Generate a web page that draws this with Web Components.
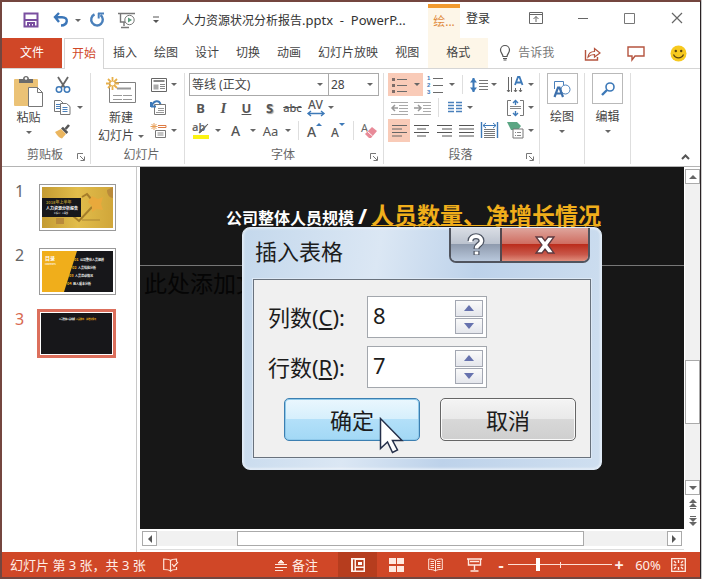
<!DOCTYPE html>
<html lang="zh-CN">
<head>
<meta charset="utf-8">
<meta name="viewport" content="width=device-width, initial-scale=1">
<title>人力资源状况分析报告.pptx - PowerPoint</title>
<style>
  html, body { margin: 0; height: 100%; }
  body {
    background: #c9c9c9;
    font: 12px/18px "Noto Sans", "Noto Sans CJK SC", sans-serif;
    color: #444;
    --accent: #d04727;
    --cell: 23px;
  }
</style>
</head>
<body>
<pp-app></pp-app>
<script>
const ICONS = {
  save: [16,16,'<path d="M1.5 1.5h13v13h-13z" fill="none" stroke="#7a4fa0" stroke-width="2"/><path d="M2 8h12M5 15v-4h6v4M8 11v4" fill="none" stroke="#7a4fa0" stroke-width="2"/>'],
  undo: [16,16,'<path d="M6 1L2 5l4 5M2.500 5.200H9c7 0 6 8-1 8.300" fill="none" stroke="#3b76b8" stroke-width="2.400"/>'],
  redo: [16,16,'<path d="M11.500 3a5.800 5.800 0 1 1-6 -.6" fill="none" stroke="#4a80bb" stroke-width="2.400"/><path d="M9 1.500h6M9.700 1v5.500" fill="none" stroke="#4a80bb" stroke-width="2"/>'],
  show: [18,17,'<path d="M0 1.500h17M2.500 2v8h5M6 10v4M3 15.500h8" fill="none" stroke="#777" stroke-width="1.400"/><circle cx="11.500" cy="8" r="4.700" fill="#fff" stroke="#777"/><path d="M10 5.500l4 2.500-4 2.500z" fill="#5c9c7c"/>'],
  qat: [8,8,'<path d="M1 1h6" stroke="#555"/><path d="M1 4h6L4 7z" fill="#555"/>'],
  ribbonopt: [14,12,'<path d="M.5.500h13v11H.5zM.5 2.500h13M7 10V4.500M4.500 7L7 4.500 9.500 7" fill="none" stroke="#666"/>'],
  min: [12,12,'<path d="M1 6.500h10" stroke="#666"/>'],
  max: [12,12,'<path d="M.5 1.500h10v10H.5z" fill="none" stroke="#777"/>'],
  close: [12,12,'<path d="M1 1l10 10M11 1L1 11" stroke="#666" stroke-width="1.200"/>'],
  bulb: [12,16,'<path d="M4 11.500C4 9 1.500 8 1.500 5a4.500 4.500 0 0 1 9 0c0 3-2.500 4-2.500 6.500zM4 13.500h4M4.500 15h3" fill="none" stroke="#555" stroke-width="1.200"/>'],
  share: [17,15,'<path d="M1.500 4v10h12v-3" fill="none" stroke="#b5543f" stroke-width="1.400"/><path d="M4 11c.5-4 3-5.500 6.500-5.500V2.500l5.500 4.500-5.500 4V8.500C8 8.500 6 9 4 11z" fill="none" stroke="#b5543f" stroke-width="1.200"/>'],
  comment: [18,15,'<path d="M1 1h16v9H8l-3 4v-4H1z" fill="none" stroke="#b5543f" stroke-width="1.400"/>'],
  smile: [17,17,'<circle cx="8.500" cy="8.500" r="8" fill="#f7c91f"/><circle cx="5.800" cy="6" r="1.200" fill="#5b4510"/><circle cx="11.200" cy="6" r="1.200" fill="#5b4510"/><path d="M3.500 9.500c2 4.500 8 4.500 10 0" fill="none" stroke="#5b4510" stroke-width="1.200"/>'],
  paste: [31,32,'<rect x="1" y="4" width="24" height="27" rx="1" fill="#ebc276"/><path d="M6 8V4h4c0-4 6-4 6 0h4v4z" fill="#6b6b6b"/><circle cx="13" cy="3.500" r="1.300" fill="#fff"/><path d="M15.500 12.500h9l5 5v14h-14z" fill="#fff" stroke="#777"/><path d="M24.500 12.500v5h5" fill="none" stroke="#777"/>'],
  cut: [16,16,'<path d="M3 0l7 11M13 0L6 11" stroke="#666" stroke-width="1.800"/><circle cx="4" cy="12.500" r="2.700" fill="none" stroke="#3d79b8" stroke-width="1.500"/><circle cx="12" cy="12.500" r="2.700" fill="none" stroke="#3d79b8" stroke-width="1.500"/>'],
  copy: [17,15,'<path d="M.5.500h6l3 3v8h-9z" fill="#fff" stroke="#777"/><path d="M2 4.500h5M2 6.500h5M2 8.500h5" stroke="#4a80bb"/><path d="M6.500 3.500h6l3.500 3v8H6.500z" fill="#fff" stroke="#777"/><path d="M8.500 7.500h5M8.500 9.500h5M8.500 11.500h5" stroke="#4a80bb"/>'],
  brush: [17,16,'<path d="M1 9l6-3 5 5-4 4.500C5 15 3 12 1 9z" fill="#ebb65f"/><path d="M7 5.500l5.500 5.500 1.700-2L9 3.700z" fill="#555"/><path d="M11.500 6L15 2" stroke="#555" stroke-width="2.600"/>'],
  newslide: [31,28,'<path d="M3.500 5.500h26v20h-26z" fill="#fff" stroke="#808080"/><path d="M11 11.500h14" stroke="#999" stroke-width="2"/><path d="M7 18.500h19M7 22.500h19" stroke="#999" stroke-dasharray="9 1"/><g stroke="#e8b04a" stroke-width="1.800"><path d="M6.500 0v13M0 6.500h13M2 2l9 9M11 2l-9 9"/></g><circle cx="6.500" cy="6.500" r="2" fill="#fff"/>'],
  layout: [16,14,'<path d="M.5.500h15v13H.5z" fill="#fff" stroke="#666"/><path d="M2.500 3h11" stroke="#888" stroke-width="2"/><path d="M2.500 6.500h5v5h-5z" fill="#aaa"/><path d="M9 6.500h5M9 8.500h5M9 10.500h5" stroke="#888"/>'],
  reset: [17,16,'<path d="M4.500 4.500h11v10h-11z" fill="#fff" stroke="#777"/><path d="M8 8.500h6M8 10.500h6M6 12.500h8" stroke="#999"/><path d="M1 7V2M1 6.500h5M1.500 6C4 0 9 0 10.500 4" fill="none" stroke="#3d79b8" stroke-width="2"/>'],
  section: [17,16,'<path d="M4 0v7M.5 3.500h7M1.500 1l5 5M6.500 1l-5 5" stroke="#e8a05a"/><path d="M8 2.500h8v2H8" fill="none" stroke="#dd7a42"/><path d="M5.500 7.500h10v7h-10z" fill="#fff" stroke="#777"/><path d="M7.500 10h6M7.500 12h6" stroke="#888"/>'],
  eraser: [17,17,'<text x="0" y="10" font-size="11" font-family="Noto Sans" fill="#666">A</text><path d="M4 12l7-7 5 4-6 7H8z" fill="#e88a98"/><path d="M6.500 9.500l5 4.500" stroke="#fff"/>'],
  spacing: [20,14,'<path d="M4.500 0v14" stroke="#3d79b8" stroke-width="2"/><path d="M1 4.500L4.500 0 8 4.500zM1 9.500L4.500 14 8 9.500z" fill="#3d79b8"/><path d="M10 2.500h9M10 5.500h9M10 8.500h9M10 11.500h9" stroke="#777"/>'],
  avspace: [18,18,'<text x="1" y="10" font-size="12" font-weight="500" font-family="Noto Sans" fill="#555">AV</text><path d="M1 14.500h16M4 12l-3 2.500L4 17M14 12l3 2.500L14 17" fill="none" stroke="#3d79b8" stroke-width="1.400"/>'],
  highlight: [18,18,'<text x="0" y="9" font-size="11" font-weight="600" font-family="Noto Sans" fill="#666">ab</text><path d="M16 2l-7 8-2 1 1-2z" fill="#666" stroke="#666"/><path d="M1 13h16v4H1z" fill="#fbf314"/>'],
  grow: [16,18,'<text x="0" y="15" font-size="14" font-weight="500" font-family="Noto Sans" fill="#555">A</text><path d="M9 4l3-3 3 3z" fill="#3d79b8"/>'],
  shrink: [16,18,'<text x="1" y="15" font-size="12" font-weight="500" font-family="Noto Sans" fill="#555">A</text><path d="M9 1h6l-3 3z" fill="#3d79b8"/>'],
  bullets: [16,16,'<path d="M0 1h3v3H0zM0 7h3v3H0zM0 13h3v3H0z" fill="#7d6c68"/><path d="M5 2.500h10M5 8.500h10M5 14.500h10" stroke="#6b6b6b"/>'],
  numbers: [16,20,'<g font-size="6" font-weight="700" font-family="Liberation Sans" fill="#3d79b8"><text x="0" y="5">1</text><text x="0" y="12">2</text><text x="0" y="19">3</text></g><path d="M6 3.500h10M6 10.500h10M6 17.500h10" stroke="#6b6b6b"/>'],
  textdir: [17,17,'<path d="M1.500 1v15M4.500 1v15M8.500 12v4M13.500 12v4" stroke="#666"/><path d="M0 14l1.500 2L3 14M7 14l1.500 2 1.500-2M12 14l1.500 2 1.500-2" fill="none" stroke="#666"/><path d="M8 9l3-8h1.500l3 8M9.300 6.500h5" fill="none" stroke="#3d79b8" stroke-width="1.800"/>'],
  outdent: [17,14,'<path d="M0 1.500h17M8 4.500h9M8 7.500h9M8 10.500h9M0 13.500h17" stroke="#aaa"/><path d="M7 7H1M4 4L1 7l3 3" fill="none" stroke="#999" stroke-width="1.500"/>'],
  indent: [17,14,'<path d="M0 1.500h17M9 4.500h8M9 7.500h8M9 10.500h8M0 13.500h17" stroke="#aaa"/><path d="M0 7h7M4 4l3 3-3 3" fill="none" stroke="#999" stroke-width="1.500"/>'],
  columns: [14,13,'<path d="M0 1.500h6M0 4.500h6M0 7.500h6M0 10.500h6M8 1.500h6M8 4.500h6M8 7.500h6M8 10.500h6" stroke="#4a80bb" stroke-width="1.400"/>'],
  valign: [17,16,'<path d="M4 .5H.5v15H4M13 .5h3.500v15H13" fill="none" stroke="#777"/><path d="M3 8.500h11M3 6.500h11" stroke="#888"/><path d="M8.500 0v5M8.500 11v5M6 3l2.500-2.500L11 3M6 13l2.500 2.500L11 13" fill="none" stroke="#3d79b8" stroke-width="1.400"/>'],
  left: [15,12,'<path d="M0 .5h15M0 4h10M0 7.500h15M0 11h10" stroke="#666"/>'],
  center: [15,12,'<path d="M0 .5h15M3 4h9M0 7.500h15M3 11h9" stroke="#555"/>'],
  right: [15,12,'<path d="M0 .5h15M5 4h10M0 7.500h15M5 11h10" stroke="#555"/>'],
  justify: [15,12,'<path d="M0 .5h15M0 4h15M0 7.500h15M0 11h15" stroke="#555"/>'],
  distribute: [17,17,'<path d="M.5 0v16M16.500 0v16" stroke="#3d79b8" stroke-width="1.400"/><path d="M2 3.500h13M5 1L2 3.500 5 6M12 1l3 2.500L12 6" fill="none" stroke="#3d79b8"/><path d="M3 7.500h11M3 9.500h11M3 11.500h11M3 13.500h11M3 15.500h11" stroke="#777"/>'],
  smartart: [17,17,'<path d="M0 0h10l4 4-3 4H4z" fill="#5aa583"/><path d="M6 7h10v9H6z" fill="#fff" stroke="#777"/><path d="M8 10.500h1M10 10.500h4M8 13.500h1M10 13.500h4" stroke="#888"/>'],
  shapes: [18,18,'<path d="M1.500 9V1.500h9V5" fill="none" stroke="#4a80bb"/><circle cx="12.500" cy="9.500" r="4.500" fill="#fff" stroke="#4a80bb"/><path d="M1.500 17L5 7.500h1.500L10 17M3 13.500h5.500" fill="none" stroke="#3d70ac" stroke-width="2.200"/>'],
  find: [14,14,'<circle cx="9" cy="5" r="4" fill="none" stroke="#3d79b8" stroke-width="1.600"/><path d="M6 8l-5 5" stroke="#3d79b8" stroke-width="2.400"/>'],
  launcher: [8,8,'<path d="M.5 6V.5H6M3 3l4 4M7.500 3.500v4h-4" fill="none" stroke="#777"/>'],
  up: [8,4,'<path d="M0 4h8L4 0z" fill="#666"/>'],
  down: [8,4,'<path d="M0 0h8L4 4z" fill="#666"/>'],
  prev: [5,8,'<path d="M5 0v8L1 4z" fill="#555"/>'],
  next: [5,8,'<path d="M0 0v8l4-4z" fill="#555"/>'],
  dblup: [8,10,'<path d="M0 4h8L4 0zM0 8h8L4 4zM1 9h6v1H1z" fill="#666"/>'],
  dbldown: [8,10,'<path d="M0 6h8L4 10zM0 2h8L4 6zM1 0h6v1H1z" fill="#666"/>'],
  collapse: [9,6,'<path d="M1 5l3.500-3.500L8 5" fill="none" stroke="#555" stroke-width="2"/>'],
  spell: [16,14,'<path d="M7.500 2.500C6 1 3 1 .7 1v10.500c2.500 0 5 0 6.800 1.500V2.500C9 1 11 1 13.500 1v3M7.500 13c1-1 3-1.500 6-1.500V9M9 6l2 2.500L15 4" fill="none" stroke="#ffe3d8" stroke-width="1.200"/>'],
  notes: [12,12,'<path d="M3 4h6L6 1zM0 5.500h12M0 8.500h12M0 11.500h8" stroke="#ffe9e0" fill="#ffe9e0"/>'],
  normal: [14,14,'<path d="M0 0h14v14H0z" fill="#fff2ec"/><path d="M2 1.500h1.500v11H2zM5 2h7.500v6.500H5zM5 10h7.500v2.500H5z" fill="#b63d1e"/><path d="M7 4h4v3H7z" fill="#fff"/>'],
  grid: [15,14,'<path d="M0 0h7v6H0zM8 0h7v6H8zM0 8h7v6H0zM8 8h7v6H8z" fill="#ffe9e0"/>'],
  reading: [15,14,'<path d="M7.500 2.500C5 1 3 1 .7 1v10.500c2.500 0 5 0 6.800 1.500C9 11.500 11 11.500 14.300 11.500V1C11 1 9.500 1 7.500 2.500zV13M2.500 3.500H6M2.500 5.500H6M2.500 7.500H6M2.500 9.500H6M9 3.500h3.500M9 5.500h3.500M9 7.500h3.500M9 9.500h3.500" fill="none" stroke="#ffe3d8"/>'],
  play: [15,14,'<path d="M0 1h15M1.500 1v6h12V1M3 3.500h9M7.500 7v5M3.500 13h8" fill="none" stroke="#ffe9e0" stroke-width="1.400"/>'],
  fit: [15,14,'<path d="M.7.700h13.600v12.600H.7z" fill="none" stroke="#ffe9e0" stroke-width="1.300"/><path d="M7.500 2v3M7.500 9v3M2.500 7h3M9.500 7h3M3 3l2 2M12 3l-2 2M3 11l2-2M12 11l-2-2" stroke="#ffe9e0" stroke-width="1.400"/>'],
  cursor: [24,37,'<path d="M1.500 1.500v30l7-6.500 5 10.500 5-2.500-5-9.500h9.500z" fill="#fff" stroke="#25304a" stroke-width="1.500"/>'],
  help: [18,24,'<path d="M3.500 8c0-6.500 11-6.500 11 0 0 3.500-5 3.500-5 8M9.500 18v4" fill="none" stroke="#4b5260" stroke-width="6"/><path d="M3.500 9V8c0-6.500 11-6.500 11 0 0 3.500-5 3.500-5 7.500M9.500 18.500v3" fill="none" stroke="#fff" stroke-width="3.600"/>'],
  cross: [20,18,'<path d="M1 1h6l3 4 3-4h6l-6 8 6 8h-6l-3-4-3 4H1l6-8z" fill="#fff" stroke="#5d3a40" stroke-width="1.300"/>'],
  spinup: [10,6,'<path d="M0 6h10L5 0z" fill="#6672ae"/>'],
  spindown: [10,6,'<path d="M0 0h10L5 6z" fill="#6672ae"/>']
};
const RESET = `*{box-sizing:border-box}button{font:inherit;color:inherit;background:none;border:0;padding:0;margin:0;cursor:default;display:flex;align-items:center;justify-content:center}`;

function define(name, css, html) {
  customElements.define(name, class extends HTMLElement {
    connectedCallback() {
      if (this.shadowRoot) return;
      const t = document.createElement('template');
      t.innerHTML = `<style>${RESET}${css}</style>` + (typeof html === 'function' ? html(n => this.getAttribute(n), n => this.hasAttribute(n)) : html);
      this.attachShadow({ mode: 'open' }).append(t.content.cloneNode(true));
    }
  });
}

define('pp-icon', ':host{display:inline-flex;flex:none}svg{display:block;overflow:visible}', a => {
  const [w, h, body] = ICONS[a('name')];
  return `<svg width="${w}" height="${h}" viewBox="0 0 ${w} ${h}" aria-hidden="true">${body}</svg>`;
});

define('pp-tool', `
  :host{display:inline-flex;flex:none;height:23px}
  :host([selected]){background:#f9cbb8}
  button{height:100%}
  .main{width:var(--cell)}
  .caret{width:12px}
  :host([tight]) .caret{width:8px}
  .caret::before{content:"";border:3px solid transparent;border-top-color:#666;border-bottom:0}`,
  (a, has) => `<button class="main" aria-label="${a('label')}">${a('icon') ? `<pp-icon name="${a('icon')}"></pp-icon>` : '<slot></slot>'}</button>` +
    (has('menu') ? `<button class="caret" aria-label="${a('label')}选项"></button>` : ''));

define('pp-big', `
  :host{display:block;flex:none}
  button{flex-direction:column;justify-content:flex-start;width:100%;line-height:18px}
  .pic{height:36px;display:flex;align-items:center}
  :host([boxed]) .pic{width:31px;height:31px;border:1px solid #b9b9b9;justify-content:center;margin-bottom:4px}
  .arrow{border:3px solid transparent;border-top-color:#666;border-bottom:0;display:inline-block;vertical-align:middle}
  .alone{margin-top:4px}
  .last{white-space:nowrap}
  .last .arrow{margin-left:4px}`,
  a => `<button><span class="pic"><pp-icon name="${a('icon')}"></pp-icon></span><span>${a('label')}</span>` +
    (a('second') ? `<span class="last">${a('second')}<i class="arrow"></i></span>` : '<i class="arrow alone"></i>') + '</button>');

define('pp-group', `
  :host{display:flex;flex-direction:column;flex:none;padding:0 4px;border-right:1px solid #dedede;margin:4px 0 2px;width:var(--width)}
  .body{height:73px;display:flex}
  footer{display:flex;height:18px;align-items:center;color:#666}
  span{flex:1;text-align:center;padding-left:8px}
  button{width:10px;height:14px;margin-top:4px}`,
  (a, has) => `<div class="body"><slot></slot></div><footer><span>${a('label') || ''}</span>${has('launcher') ? `<button aria-label="${a('label')}设置"><pp-icon name="launcher"></pp-icon></button>` : ''}</footer>`);

define('pp-titlebar', `
  :host{display:flex;align-items:stretch;height:36px;padding-left:12px;color:#333}
  pp-tool{align-self:center}
  h1{font:inherit;margin:0;padding-left:12px;flex:0 1 258px;align-self:center;white-space:nowrap;overflow:hidden;line-height:20px}
  .latin{font-size:13px;white-space:pre}
  .context{width:32px;margin-top:2px;border-top:4px solid #f29a2e;background:#fdf6e8;color:#e08a3c;display:flex;align-items:center;justify-content:center;padding-bottom:2px}
  .login{width:36px;padding-bottom:2px}
  .win{margin-left:auto;display:flex}
  .win button{width:47px;height:32px}`,
  `<pp-tool icon="save" label="保存" style="--cell:34px"></pp-tool>
   <pp-tool icon="undo" label="撤消" menu tight style="--cell:26px"></pp-tool>
   <pp-tool icon="redo" label="重复" style="--cell:30px"></pp-tool>
   <pp-tool icon="show" label="从头开始" style="--cell:30px"></pp-tool>
   <pp-tool icon="qat" label="自定义快速访问工具栏" style="--cell:28px"></pp-tool>
   <h1>人力资源状况分析报告<span class="latin">.pptx  -  PowerP...</span></h1>
   <div class="context">绘...</div>
   <button class="login">登录</button>
   <div class="win">
     <button aria-label="功能区显示选项"><pp-icon name="ribbonopt"></pp-icon></button>
     <button aria-label="最小化"><pp-icon name="min"></pp-icon></button>
     <button aria-label="最大化"><pp-icon name="max"></pp-icon></button>
     <button aria-label="关闭"><pp-icon name="close"></pp-icon></button>
   </div>`);

define('pp-tab', `
  :host{display:flex}
  button{padding:0 8px;white-space:nowrap}
  :host([file]) button{background:var(--accent);color:#fff;padding:0 18px;margin-right:1px}
  :host([active]) button{border:1px solid #d5d5d5;border-bottom:0;color:var(--accent);background:#fff;padding:0 7px;margin-bottom:-1px}
  :host([context]) button{background:#fdf6e8;padding:0 18px}`,
  '<button role="tab"><slot></slot></button>');

define('pp-tabs', `
  :host{display:flex;height:31px;gap:1px;border-bottom:1px solid #d5d5d5;color:#444}
  .tell{padding-left:10px;gap:7px;color:#777}
  .right{margin-left:auto;display:flex}
  .right button{width:43px}`,
  `<pp-tab file>文件</pp-tab><pp-tab active>开始</pp-tab><pp-tab>插入</pp-tab><pp-tab>绘图</pp-tab><pp-tab>设计</pp-tab><pp-tab>切换</pp-tab><pp-tab>动画</pp-tab><pp-tab>幻灯片放映</pp-tab><pp-tab>视图</pp-tab><pp-tab context>格式</pp-tab>
   <button class="tell"><pp-icon name="bulb"></pp-icon>告诉我</button>
   <div class="right">
     <button aria-label="共享"><pp-icon name="share"></pp-icon></button>
     <button aria-label="批注"><pp-icon name="comment"></pp-icon></button>
     <button aria-label="反馈"><pp-icon name="smile"></pp-icon></button>
   </div>`);

define('pp-ribbon', `
  :host{display:flex;border-bottom:1px solid #b4b4b4;background:#fff}
  .col{display:flex;flex-direction:column}
  .fill{flex:1}
  .row{display:flex;height:23px}
  .sep{width:1px;margin:2px 4px;background:#dedede}
  .push{margin-left:auto}
  .combos{display:flex;width:190px}
  select{appearance:none;font:inherit;color:#444;height:23px;border:1px solid #aaa;background:#fff;border-radius:0;padding:0 2px;width:100%}
  label{position:relative;display:block;flex:1}
  label+label{flex:0 0 51px;margin-left:-1px}
  label::after{content:"";position:absolute;right:6px;top:10px;border:3px solid transparent;border-top-color:#666;border-bottom:0;pointer-events:none}
  .fmt{font-size:13px;font-weight:700;color:#555}
  .fmt i{font-family:"Liberation Serif",serif;font-size:15px}
  .fmt s{font-size:11px;font-weight:500}
  .sh{text-shadow:1px 1px 1px #999}
  .ltr{font-size:14px;font-weight:500;color:#555}
  .mid{font-size:13px;color:#555}
  .collapse{margin:auto 8px 2px auto;width:14px;height:14px}`,
  `<pp-group label="剪贴板" launcher style="--width:89px">
     <pp-big icon="paste" label="粘贴" style="width:45px"></pp-big>
     <div class="col"><pp-tool icon="cut" label="剪切"></pp-tool><pp-tool icon="copy" label="复制" menu></pp-tool><pp-tool icon="brush" label="格式刷"></pp-tool></div>
   </pp-group>
   <pp-group label="幻灯片" style="--width:94px">
     <pp-big icon="newslide" label="新建" second="幻灯片" style="width:52px"></pp-big>
     <div class="col"><pp-tool icon="layout" label="版式" menu tight></pp-tool><pp-tool icon="reset" label="重置"></pp-tool><pp-tool icon="section" label="节" menu tight></pp-tool></div>
   </pp-group>
   <pp-group label="字体" launcher style="--width:199px">
     <div class="col">
       <div class="combos"><label><select aria-label="字体"><option>等线 (正文)</option></select></label><label><select aria-label="字号"><option>28</option></select></label></div>
       <div class="row fmt"><pp-tool label="加粗">B</pp-tool><pp-tool label="倾斜"><i>I</i></pp-tool><pp-tool label="下划线"><u>U</u></pp-tool><pp-tool label="文字阴影"><span class="sh">S</span></pp-tool><pp-tool label="删除线"><s>abc</s></pp-tool><pp-tool icon="avspace" label="字符间距" menu tight></pp-tool></div>
       <div class="row"><pp-tool icon="highlight" label="突出显示" menu></pp-tool><pp-tool label="字体颜色" menu><span class="ltr">A</span></pp-tool><pp-tool label="更改大小写" menu><span class="mid">Aa</span></pp-tool><span class="sep"></span><pp-tool icon="grow" label="增大字号"></pp-tool><pp-tool icon="shrink" label="减小字号"></pp-tool><span class="sep"></span><pp-tool icon="eraser" label="清除格式"></pp-tool></div>
     </div>
   </pp-group>
   <pp-group label="段落" launcher style="--width:156px">
     <div class="col fill">
       <div class="row"><pp-tool selected icon="bullets" label="项目符号" menu></pp-tool><pp-tool icon="numbers" label="编号" menu></pp-tool><span class="sep"></span><pp-tool icon="spacing" label="行距" menu tight></pp-tool><pp-tool class="push" icon="textdir" label="文字方向" menu tight></pp-tool></div>
       <div class="row"><pp-tool icon="outdent" label="降低列表级别"></pp-tool><pp-tool icon="indent" label="提高列表级别"></pp-tool><span class="sep"></span><pp-tool icon="columns" label="分栏" menu tight></pp-tool><pp-tool class="push" icon="valign" label="对齐文本" menu tight></pp-tool></div>
       <div class="row"><pp-tool selected icon="left" label="左对齐" style="--cell:22px"></pp-tool><pp-tool icon="center" label="居中"></pp-tool><pp-tool icon="right" label="右对齐" style="--cell:22px"></pp-tool><pp-tool icon="justify" label="两端对齐"></pp-tool><pp-tool icon="distribute" label="分散对齐" style="--cell:22px"></pp-tool><pp-tool class="push" icon="smartart" label="转换为 SmartArt" menu tight></pp-tool></div>
     </div>
   </pp-group>
   <pp-group style="--width:45px"><pp-big boxed icon="shapes" label="绘图" style="width:36px"></pp-big></pp-group>
   <pp-group style="--width:46px"><pp-big boxed icon="find" label="编辑" style="width:37px"></pp-big></pp-group>
   <button class="collapse" aria-label="折叠功能区"><pp-icon name="collapse"></pp-icon></button>`);

define('pp-thumb', `
  :host{display:flex;align-items:flex-start;gap:15px;height:64px;font-size:16px;line-height:16px;color:#666}
  span{width:9px}
  button{border:1px solid #999;padding:2px;background:#fff;margin-top:1px}
  :host([selected]){color:#d8694f}
  :host([selected]) button{border:3px solid #dc6f5c;padding:1px;margin:-2px}
  ::slotted(svg){display:block;width:71px;height:41px}`,
  a => `<span>${a('number')}</span><button aria-label="幻灯片 ${a('number')}"><slot></slot></button>`);

define('pp-slides', `
  :host{display:block;flex:none;width:135px;border-right:1px solid #c8c8c8;padding:16px 0 0 13px;background:#fff}
  text{font-family:"Noto Sans CJK SC",sans-serif;font-weight:700}`,
  `<pp-thumb number="1"><svg viewBox="0 0 71 41">
     <defs><linearGradient id="g"><stop stop-color="#c49b32"/><stop offset=".5" stop-color="#e2bd4b"/><stop offset="1" stop-color="#d0a63a"/></linearGradient></defs>
     <path d="M0 0h71v41H0z" fill="url(#g)"/><path d="M40 10l5-3 5 6M50 20L37 34l-6-5" fill="none" stroke="#a57d2a" stroke-width="2"/><path d="M40 33h18" stroke="#a98332"/><path d="M50 9l6 3 5-2-2 7 2 6-6-1-5 3v-6l-4-4z" fill="#e9a93c"/><path d="M14 31h8v6h-8zM65 3l6-3v11c-4 0-6-4-6-8z" fill="#b98a3a"/>
     <path d="M0 11h39v19H0z" fill="#17171b"/><text x="4" y="17" font-size="4" fill="#a98b2d">2018年上半年</text><text x="4" y="23" font-size="4" fill="#fff">人力资源分析报告</text><text x="12" y="27" font-size="2" fill="#ccc">汇报人：人事部</text></svg></pp-thumb>
   <pp-thumb number="2"><svg viewBox="0 0 71 41">
     <path d="M0 0h71v41H0z" fill="#17171a"/><path d="M0 0h35L22 41H0z" fill="#f0ae1b"/><text x="3" y="9" font-size="5" fill="#fff">目录</text><text x="3" y="14" font-size="2" fill="#fff">CONTENTS</text>
     <g font-size="3" fill="#fff"><text x="38" y="10">公司整体人员规模</text><text x="36" y="18">人员结构分析</text><text x="33" y="26">人员流动情况</text><text x="31" y="34">用人成本分析</text></g>
     <g font-size="4" fill="#f0ae1b"><text x="32" y="10">01</text><text x="30" y="18">02</text><text x="27" y="26">03</text><text x="25" y="34">04</text></g></svg></pp-thumb>
   <pp-thumb number="3" selected><svg viewBox="0 0 71 41"><path d="M0 0h71v41H0z" fill="#17171a"/><text x="18" y="7" font-size="2" fill="#fff">公司整体人员规模</text><text x="35" y="7" font-size="2" fill="#f0ae1b">人员数量、净增长情况</text></svg></pp-thumb>`);

define('pp-spin', `
  :host{display:flex;align-items:center;height:42px}
  label{width:99px;white-space:nowrap}
  .box{display:flex;width:120px;height:42px;border:1px solid #a3a7ad;background:#fff;padding:3px}
  input{flex:1;min-width:0;border:0;padding:0 0 4px 2px;font:inherit;color:inherit;background:none;outline:0}
  .arrows{width:28px;display:grid;grid-template-rows:1fr 1fr;gap:1px}
  .arrows button{border:1px solid #a3a7b2;background:linear-gradient(#fafafa,#e4e6ec)}`,
  a => `<label for="n">${a('label')}(<u>${a('key')}</u>):</label><div class="box"><input id="n" inputmode="numeric" value="${a('value')}"><div class="arrows"><button aria-label="增加"><pp-icon name="spinup"></pp-icon></button><button aria-label="减少"><pp-icon name="spindown"></pp-icon></button></div></div>`);

define('pp-dialog', `
  :host{display:block;width:360px;border:1px solid #dfeaf6;border-radius:8px;background:linear-gradient(100deg,#c4d8ec,#dbe7f4 35%,#bdd2ea 60%,#cfdff0);box-shadow:inset 0 0 3px #fff;padding:0 10px 11px;font-size:22px;line-height:32px;color:#1c1c1c}
  header{display:flex;height:51px}
  h2{font:inherit;margin:0;padding:7px 0 0 2px;flex:1}
  .caps{display:flex;height:35px;border:2px solid #50545e;border-top:0;border-radius:0 0 7px 7px;overflow:hidden;margin-right:1px}
  .q{width:51px;background:linear-gradient(#d9dde4,#bcc3cf 48%,#8f9bae 50%,#b9c8dc);border-right:2px solid #54484e}
  .x{width:86px;background:linear-gradient(#dea59d,#cf6d60 48%,#bb2d1c 50%,#c9584a 80%,#e08e7d)}
  .client{background:#f0f0f0;border:1px solid #69727d;box-shadow:0 0 0 1px #dce8f5;padding:16px 14px;height:179px;display:flex;flex-direction:column;gap:8px}
  .actions{display:flex;gap:20px;padding-left:16px;margin-top:2px}
  .actions button{width:136px;height:43px;border:1px solid #666;border-radius:5px;background:linear-gradient(#f4f4f4,#e9e9e9 48%,#d8d8d8 50%,#cfcfcf);box-shadow:inset 0 0 0 1px #fafafa}
  .actions .ok{border-color:#3c7fb1;background:linear-gradient(#eaf7fe,#d6effc 48%,#b3e0f9 50%,#a2d8f5);box-shadow:inset 0 0 0 1px #8fc9ea}`,
  `<header><h2>插入表格</h2><div class="caps"><button class="q" aria-label="帮助"><pp-icon name="help"></pp-icon></button><button class="x" aria-label="关闭"><pp-icon name="cross"></pp-icon></button></div></header>
   <div class="client"><pp-spin label="列数" key="C" value="8"></pp-spin><pp-spin label="行数" key="R" value="7"></pp-spin>
   <div class="actions"><button class="ok">确定</button><button>取消</button></div></div>`);

define('pp-stage', `
  :host{display:block;position:relative;overflow:hidden;background:#171717;min-width:0}
  h2{margin:0;padding:31px 0 0 3px;height:99px;border-bottom:1px solid #777;text-align:center;font-weight:700;font-size:16px;line-height:34px;color:#fff;white-space:nowrap}
  .slash{font-size:22px;padding:0 4px}
  .hot{font-size:23px;color:#f0ae1b;text-decoration:underline;text-decoration-thickness:1px}
  p{margin:0;padding:0 0 0 4px;font-size:23px;line-height:34px;color:#050505}
  pp-dialog{position:absolute;left:102px;top:60px}
  pp-icon{position:absolute;left:239px;top:250px}`,
  `<h2>公司整体人员规模<span class="slash">/</span><span class="hot">人员数量、净增长情况</span></h2>
   <p>此处添加文本</p>
   <pp-dialog role="dialog" aria-label="插入表格"></pp-dialog><pp-icon name="cursor"></pp-icon>`);

define('pp-scroll', `
  :host{display:flex;background:#f1f1f1}
  :host([vertical]){flex-direction:column}
  button{flex:none;width:15px;height:15px;border:1px solid #aaa;background:#fff}
  .before{flex:var(--before)}.after{flex:var(--after)}
  .thumb{flex:var(--size);border:1px solid #aaa;background:#fff}`,
  (a, v) => `<button aria-label="向前滚动"><pp-icon name="${v('vertical') ? 'up' : 'prev'}"></pp-icon></button><div class="before"></div><div class="thumb"></div><div class="after"></div><button aria-label="向后滚动"><pp-icon name="${v('vertical') ? 'down' : 'next'}"></pp-icon></button>`);

define('pp-editor', `
  :host{display:grid;flex:1;min-width:0;margin-left:3px;grid-template:minmax(0,1fr) 23px / minmax(0,1fr) 16px;background:#fff}
  .side{display:flex;flex-direction:column;padding:2px 0 0 1px}
  .side pp-scroll{flex:1;--before:175;--size:62;--after:56}
  .side button{height:17px}
  .bottom{padding:2px 2px 0;border-bottom:1px solid #ddd;height:21px}
  .bottom pp-scroll{--before:80;--size:347;--after:83}`,
  `<pp-stage></pp-stage>
   <div class="side"><pp-scroll vertical></pp-scroll><button aria-label="上一张幻灯片"><pp-icon name="dblup"></pp-icon></button><button aria-label="下一张幻灯片"><pp-icon name="dbldown"></pp-icon></button></div>
   <div class="bottom"><pp-scroll></pp-scroll></div>`);

define('pp-status', `
  :host{display:flex;height:25px;background:var(--accent);color:#ffeee7;font-size:13px;line-height:20px;align-items:stretch;padding:0 7px 0 8px}
  span{align-self:center;white-space:nowrap}
  .spell{margin-left:17px}
  .right{margin-left:auto;display:flex}
  .notes{gap:5px;margin-right:20px}
  .view{width:39px}
  .view.on{background:#b63d1e}
  .sign{width:14px;font-size:16px;font-weight:700}
  input{appearance:none;width:104px;margin:0;background:linear-gradient(#ffe0d5,#ffe0d5) center/100% 1px no-repeat,linear-gradient(#ffe0d5,#ffe0d5) center/1px 6px no-repeat}
  input::-webkit-slider-thumb{appearance:none;width:4px;height:13px;background:#fff}
  .pct{width:36px;margin-left:4px;margin-right:-3px}
  .fit{width:30px}`,
  `<span>幻灯片 第 3 张，共 3 张</span><button class="spell" aria-label="拼写检查"><pp-icon name="spell"></pp-icon></button>
   <div class="right"><button class="notes"><pp-icon name="notes"></pp-icon>备注</button>
   <button class="view on" aria-label="普通视图"><pp-icon name="normal"></pp-icon></button><button class="view" aria-label="幻灯片浏览"><pp-icon name="grid"></pp-icon></button><button class="view" aria-label="阅读视图"><pp-icon name="reading"></pp-icon></button><button class="view" aria-label="幻灯片放映"><pp-icon name="play"></pp-icon></button>
   <button class="sign" aria-label="缩小">-</button><input type="range" min="0" max="100" value="28" aria-label="缩放"><button class="sign" aria-label="放大">+</button><button class="pct">60%</button><button class="fit" aria-label="适应窗口"><pp-icon name="fit"></pp-icon></button></div>`);

define('pp-app', `
  :host{display:flex;flex-direction:column;min-height:100vh;box-sizing:border-box;margin-right:1px;background:#fff;border:2px solid #74463f;border-right:1px solid #2a2224}
  main{display:flex;flex:1}`,
  `<pp-titlebar></pp-titlebar><pp-tabs role="tablist"></pp-tabs><pp-ribbon></pp-ribbon><main><pp-slides></pp-slides><pp-editor></pp-editor></main><pp-status></pp-status>`);
</script>
</body>
</html>
